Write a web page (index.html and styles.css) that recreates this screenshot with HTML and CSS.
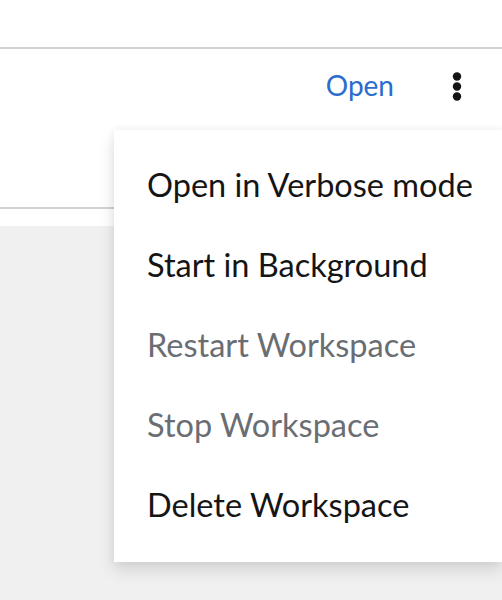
FILE: index.html
```html
<!DOCTYPE html>
<html>
<head>
<meta charset="utf-8">
<link rel="stylesheet" href="styles.css">
</head>
<body>
<div class="page">
  <div class="top"></div>
  <div class="row">
    <div class="actions">
      <a class="open-link">Open</a>
      <button class="kebab" aria-label="Actions">
        <svg width="10" height="30" viewBox="0 0 10 30"><circle cx="5" cy="4.5" r="4.2"/><circle cx="5" cy="14.5" r="4.2"/><circle cx="5" cy="24.5" r="4.2"/></svg>
      </button>
    </div>
  </div>
  <div class="spacer"></div>
  <div class="content"></div>
  <ul class="menu">
    <li class="item">Open in Verbose mode</li>
    <li class="item">Start in Background</li>
    <li class="item disabled">Restart Workspace</li>
    <li class="item disabled">Stop Workspace</li>
    <li class="item">Delete Workspace</li>
  </ul>
</div>
</body>
</html>
```
FILE: styles.css
```css
html, body {
  margin: 0;
  padding: 0;
}
body {
  background: #f0f0f0;
  font-family: Lato, "Liberation Sans", sans-serif;
  color: #151515;
  overflow: hidden;
}
.page {
  position: relative;
  height: 600px;
  overflow: hidden;
}
.top {
  height: 47px;
  background: #fff;
  border-bottom: 2px solid #d2d2d2;
}
.row {
  height: 158px;
  background: #fff;
  border-bottom: 2px solid #d2d2d2;
  display: flex;
  justify-content: flex-end;
  align-items: flex-start;
}
.actions {
  display: flex;
  align-items: center;
  height: 76px;
  padding-right: 40px;
}
.open-link {
  color: #2b6cce;
  font-size: 28px;
  margin-right: 58px;
  margin-bottom: 4px;
}
.kebab {
  border: 0;
  background: none;
  padding: 0;
  display: flex;
}
.kebab svg circle {
  fill: #151515;
}
.spacer {
  height: 17px;
  background: #fff;
}
.menu {
  position: absolute;
  top: 130px;
  left: 114px;
  right: 0;
  margin: 0;
  padding: 16px 0;
  list-style: none;
  background: #fff;
  box-shadow: 0 8px 16px rgba(3, 3, 3, 0.12), 0 0 8px rgba(3, 3, 3, 0.06);
}
.item {
  box-sizing: border-box;
  height: 80px;
  display: flex;
  align-items: center;
  padding-left: 33px;
  padding-bottom: 4px;
  font-size: 32.5px;
  color: #151515;
}
.item.disabled {
  color: #6a6e73;
}
```
